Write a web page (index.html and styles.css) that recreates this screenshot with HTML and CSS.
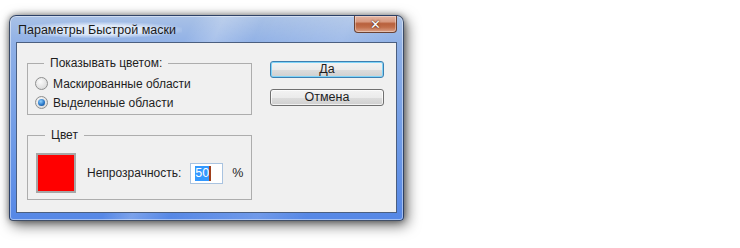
FILE: index.html
```html
<!DOCTYPE html>
<html lang="ru">
<head>
<meta charset="utf-8">
<link rel="stylesheet" href="styles.css">
</head>
<body>
<div class="window">
  <div class="titlebar">
    <span class="title">Параметры Быстрой маски</span>
    <div class="close"><span class="x">✕</span></div>
  </div>
  <div class="client">
    <div class="left">
      <fieldset class="group g1">
        <legend>Показывать цветом:</legend>
        <label class="row"><span class="radio"></span><span>Маскированные области</span></label>
        <label class="row"><span class="radio checked"></span><span>Выделенные области</span></label>
      </fieldset>
      <fieldset class="group g2">
        <legend>Цвет</legend>
        <div class="colorrow">
          <div class="swatch"></div>
          <span class="lbl">Непрозрачность:</span>
          <div class="input"><span class="sel">50</span><span class="caret"></span></div>
          <span class="pct">%</span>
        </div>
      </fieldset>
    </div>
    <div class="right">
      <div class="btn default">Да</div>
      <div class="btn">Отмена</div>
    </div>
  </div>
</div>
</body>
</html>
```
FILE: styles.css
```css
html, body { margin: 0; padding: 0; background: #fff; }
body { width: 740px; height: 248px; overflow: hidden; font-family: "Liberation Sans", Arial, sans-serif; font-size: 12px; color: #1e1e1e; }

.window {
  margin: 15px 0 0 9px;
  width: 395px;
  height: 206px;
  box-sizing: border-box;
  border: 1px solid rgba(30, 40, 60, 0.75);
  border-radius: 7px 7px 4px 4px;
  padding: 0 6px 7px 6px;
  display: flex;
  flex-direction: column;
  background:
    linear-gradient(115deg, rgba(255,255,255,0) 0%, rgba(255,255,255,0) 38%, rgba(255,255,255,0.22) 44%, rgba(255,255,255,0) 52%, rgba(255,255,255,0.15) 70%, rgba(255,255,255,0) 80%),
    linear-gradient(to bottom, #a9c1e6 0%, #8fb0e6 14%, #6f9be6 60%, #5587e6 100%);
  box-shadow: inset 0 0 0 1px rgba(255,255,255,0.45), 3px 4px 14px rgba(0,0,0,0.6), 0 0 6px rgba(0,0,0,0.4);
}

.titlebar {
  height: 26px;
  display: flex;
  justify-content: space-between;
  align-items: flex-start;
}
.title {
  margin-top: 6px;
  margin-left: 1px;
  line-height: 16px;
  font-size: 12.5px;
  color: #1a1a1a;
  padding: 0 6px 0 1px;
  background: radial-gradient(ellipse at center, rgba(235,242,252,0.85) 40%, rgba(235,242,252,0) 75%);
}
.close {
  width: 43px;
  height: 17px;
  box-sizing: border-box;
  border: 1px solid #6a4234;
  border-top: none;
  border-radius: 0 0 4px 4px;
  background: linear-gradient(to bottom, #e3b4a3 0%, #d99a80 35%, #b8603c 48%, #c16e4a 70%, #dca38a 100%);
  box-shadow: inset 0 0 0 1px rgba(255,255,255,0.35);
  display: flex;
  align-items: center;
  justify-content: center;
}
.x { color: #fff; font-family: "DejaVu Sans", sans-serif; font-size: 13px; font-weight: bold; line-height: 13px; text-shadow: 0 0 2px #5a2a18, 0 0 1px #5a2a18; }

.client {
  flex: 1;
  background: #f0f0f0;
  border: 1px solid #4b5f80;
  display: flex;
  padding: 13px 0 0 10px;
  gap: 18px;
}

.left { width: 225px; display: flex; flex-direction: column; }
.group {
  margin: 0;
  padding: 0;
  border: 1px solid #adadad;
  box-sizing: border-box;
}
.group legend {
  margin-left: 9px;
  padding: 0 6px;
  line-height: 14px;
  font-size: 12px;
}
.g1 { padding: 4px 0 2px 7px; }
.row { display: flex; align-items: center; height: 19px; gap: 5px; font-size: 12px; }
.radio {
  width: 13px; height: 13px; box-sizing: border-box;
  border-radius: 50%;
  border: 1px solid #8e8f8f;
  background: radial-gradient(circle at 40% 35%, #fbfbfb 0%, #e2e2e2 60%, #cfcfcf 100%);
  display: flex; align-items: center; justify-content: center;
}
.radio.checked::after {
  content: "";
  width: 7px; height: 7px; border-radius: 50%;
  background: radial-gradient(circle at 40% 35%, #8fd0ff 0%, #2a78c8 55%, #11417c 100%);
}

.g2 { margin-top: 13px; padding: 11px 0 6px 8px; }
.colorrow { display: flex; align-items: center; height: 40px; }
.swatch { width: 40px; height: 40px; box-sizing: border-box; background: #ff0000; border: 2px solid #a7a7a7; }
.lbl { margin-left: 11px; font-size: 12px; }
.input {
  margin-left: 9px;
  width: 33px; height: 21px; box-sizing: border-box;
  border: 1px solid #a9c3e0;
  background: #fff;
  display: flex; align-items: center;
  padding-left: 4px;
}
.sel { background: #3399ff; color: #fff; font-size: 12.5px; line-height: 15px; }
.caret { width: 2px; height: 15px; background: #a0401c; }
.pct { margin-left: 9px; font-size: 12.5px; }

.right { width: 114px; margin-top: 5px; display: flex; flex-direction: column; gap: 11px; }
.btn {
  height: 17px; box-sizing: border-box;
  border: 1px solid #707070;
  border-radius: 3px;
  background: linear-gradient(to bottom, #f3f3f3 0%, #ebebeb 50%, #dddddd 51%, #cfcfcf 100%);
  box-shadow: inset 0 0 0 1px rgba(255,255,255,0.7);
  text-align: center;
  line-height: 15px;
  font-size: 12.5px;
}
.btn.default { border-color: #3c7fb1; box-shadow: inset 0 0 0 1px #7fd4f8; }
```
